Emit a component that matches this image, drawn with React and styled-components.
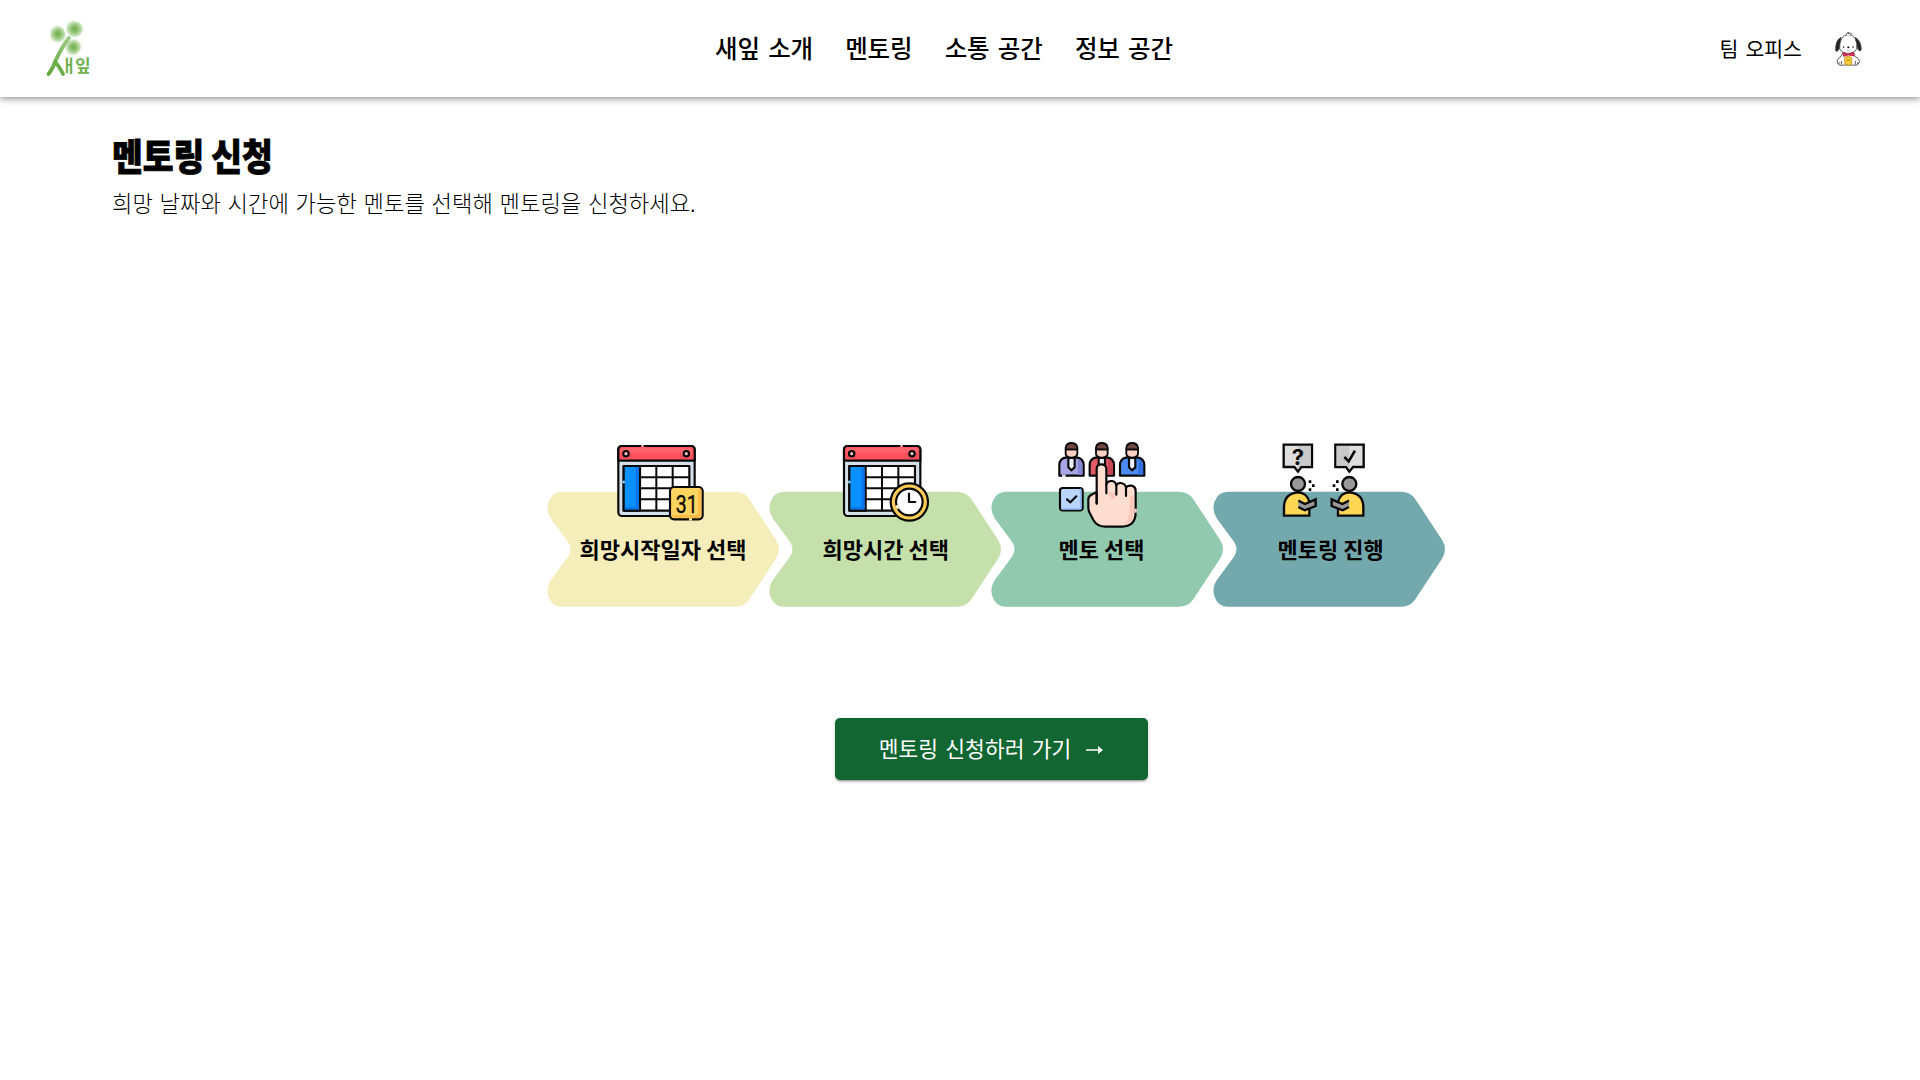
import React from 'react';
import styled, { createGlobalStyle } from 'styled-components';

const GlobalStyle = createGlobalStyle`
  * { box-sizing: border-box; }
  body {
    margin: 0;
    background: #fff;
    color: #000;
    font-family: 'Noto Sans CJK KR', 'Noto Sans', sans-serif;
    overflow: hidden;
  }
`;

const Page = styled.div`
  display: flex;
  flex-direction: column;
  height: 1080px;
`;

const Header = styled.header`
  display: grid;
  grid-template-columns: 670px 1fr auto auto;
  align-items: center;
  height: 97px;
  padding: 0 58px 0 45px;
  background: #fff;
  box-shadow: 0 2px 4px -1px rgba(0, 0, 0, 0.2), 0 4px 5px 0 rgba(0, 0, 0, 0.14),
    0 1px 10px 0 rgba(0, 0, 0, 0.12);
`;

const LogoSvg = styled.svg`
  display: block;
  width: 48px;
  height: 60px;
`;

const Nav = styled.nav`
  display: flex;
  gap: 32.3px;
  padding-bottom: 2px;
`;

const NavItem = styled.a`
  font-size: 24.5px;
  line-height: 36px;
  letter-spacing: -0.15px;
  word-spacing: 3px;
  font-weight: 500;
  white-space: nowrap;
`;

const TeamLink = styled.a`
  font-size: 20.5px;
  line-height: 30px;
  font-weight: 400;
  word-spacing: 2.5px;
  margin-right: 33px;
  padding-bottom: 2px;
  white-space: nowrap;
`;

const AvatarSvg = styled.svg`
  display: block;
  width: 27px;
  height: 36px;
`;

const Main = styled.main`
  display: flex;
  flex-direction: column;
  align-items: center;
  padding: 33px 50px 0 112px;
`;

const Intro = styled.section`
  align-self: stretch;
  height: 300px;
`;

const Title = styled.h1`
  width: max-content;
  margin: 0;
  font-size: 37px;
  line-height: 50px;
  font-weight: 900;
  word-spacing: -1px;
  -webkit-text-stroke: 0.8px #000;
  transform: scaleX(0.905);
  transform-origin: left center;
`;

const Subtitle = styled.p`
  width: max-content;
  margin: 4px 0 0;
  font-size: 23px;
  line-height: 36px;
  font-weight: 300;
  word-spacing: 1.9px;
  transform: scaleX(0.965);
  transform-origin: left center;
`;

const Steps = styled.ol`
  display: grid;
  grid-template-columns: repeat(4, 222px);
  margin: 0;
  padding: 0;
  list-style: none;
`;

const Step = styled.li`
  display: grid;
  height: 177px;
`;

const StepArt = styled.svg`
  grid-area: 1 / 1;
  display: block;
  width: 232px;
  height: 177px;
  overflow: visible;
`;

const StepLabel = styled.span`
  grid-area: 1 / 1;
  width: 232px;
  padding-top: 102px;
  padding-left: ${(p) => p.$start}px;
  font-size: 22px;
  line-height: 32px;
  font-weight: 700;
  white-space: nowrap;
`;

const ApplyButton = styled.button`
  display: flex;
  align-items: center;
  justify-content: center;
  gap: 15px;
  width: 313px;
  height: 62px;
  margin-top: 111px;
  padding: 0 0 2px 1px;
  border: 0;
  border-radius: 5px;
  background: #126632;
  color: #fff;
  font: 400 21.5px/32px 'Noto Sans CJK KR', sans-serif;
  word-spacing: 2.5px;
  box-shadow: 0 3px 1px -2px rgba(0, 0, 0, 0.2), 0 2px 2px 0 rgba(0, 0, 0, 0.14),
    0 1px 5px 0 rgba(0, 0, 0, 0.12);
`;

const ArrowSvg = styled.svg`
  width: 18px;
  height: 10px;
  margin-top: 4px;
`;

function Logo() {
  return (
    <LogoSvg viewBox="45 19 48 60" aria-label="새잎">
      <defs>
        <radialGradient id="leaf">
          <stop offset="0" stopColor="#69ab47" />
          <stop offset="0.35" stopColor="#8cc16f" />
          <stop offset="0.75" stopColor="#c4dfb5" />
          <stop offset="1" stopColor="#e6f2df" stopOpacity="0.3" />
        </radialGradient>
        <linearGradient id="stem" x1="1" y1="0" x2="0" y2="1">
          <stop offset="0" stopColor="#9ccb85" />
          <stop offset="1" stopColor="#5fa83a" />
        </linearGradient>
      </defs>
      <path d="M67 40Q60 45 52 42Q47 40 50 35Q50 27 56 25Q63 26 65 32Z" fill="url(#leaf)" />
      <path d="M68 38Q64 28 66 23Q71 18 76 21Q84 23 84 30Q81 37 75 38Z" fill="url(#leaf)" />
      <path d="M68 40Q75 36 82 42Q83 49 77 54Q72 58 66 54Q63 47 68 40Z" fill="url(#leaf)" />
      <path d="M69 38Q61 48 55 62Q52 70 48.500 74" fill="none" stroke="url(#stem)" strokeWidth="3.800" strokeLinecap="round" />
      <path d="M55 62Q59 66 63 74" fill="none" stroke="#6bae49" strokeWidth="3.800" strokeLinecap="round" />
      <g fill="#6fb24d" fontFamily="'Noto Sans CJK KR', sans-serif" fontWeight="700" fontSize="17">
        <text x="61" y="72">ㅐ</text>
        <text x="75" y="72">잎</text>
      </g>
    </LogoSvg>
  );
}

function Avatar() {
  return (
    <AvatarSvg viewBox="407 34 81 108">
      <g stroke="#444" strokeWidth="2.500" strokeLinejoin="round">
        <path d="M424 112Q412 116 414 130Q420 140 434 136H460Q476 140 480 128Q480 114 468 112L462 98H432Z" fill="#fff" />
        <path d="M425 53Q408 62 409 92Q410 98 416 93Q426 80 425 53Z" fill="#222" />
        <path d="M468 53Q485 64 486 88Q484 97 478 92Q468 78 468 53Z" fill="#222" />
        <path d="M426 58Q434 45 447 45Q461 45 468 58Q475 74 472 88Q464 101 447 101Q428 101 421 88Q420 72 426 58Z" fill="#fff" />
        <path d="M440 47Q441 38 448 38L446 43Q453 37 457 42L452 47" fill="#fff" />
        <path d="M431 98L446 104L463 98L464 109L447 106L433 110Z" fill="#d92b55" stroke="#b71c46" />
        <path d="M436 114Q447 106 457 114V134Q447 139 437 134Z" fill="#f9cf36" stroke="#c08d1d" />
        <path d="M442 121H452" stroke="#8a651c" />
        <path d="M419 127V134M426 124V135M468 124V135M475 127V134" fill="none" />
      </g>
      <circle cx="433" cy="82" r="2.200" />
      <circle cx="461" cy="82" r="2.200" />
      <ellipse cx="447" cy="83" rx="3.500" ry="2.500" />
      <path d="M442 91Q447 94 452 91" fill="none" stroke="#777" strokeWidth="1.500" />
    </AvatarSvg>
  );
}

const outline = { stroke: '#080808', strokeWidth: 6.5, strokeLinejoin: 'round', strokeLinecap: 'round' };

function Calendar({ shift = 0, topGap }) {
  return (
    <g transform={`translate(${shift} 0)`} {...outline}>
      <rect x="235" y="48" width="229" height="210" rx="11" fill="#d5e0e8" />
      <path d="M235 92V59Q235 48 246 48H453Q464 48 464 59V92Z" fill="#ff515d" />
      <path d="M240 60Q240 53 247 53H452Q458 53 458 60V70H240Z" fill="#ff626c" stroke="none" />
      <rect x="251" y="108" width="197" height="134" fill="#fff" />
      <rect x="251" y="108" width="49" height="134" fill="#0a91ff" />
      <path d="M287 112H297V238H255V231H287Z" fill="#0874ef" stroke="none" />
      <path d="M349 108V242M398 108V242M300 142H448M300 175H448M300 208H448" fill="none" strokeWidth="6" />
      <circle cx="258" cy="71" r="8" fill="#f7c3c5" />
      <circle cx="439" cy="71" r="8" fill="#f7c3c5" />
      <path d={`M${topGap} 48h7`} stroke="#ffa0a5" strokeLinecap="butt" strokeWidth="7" />
      <path d="M251 152v8" stroke="#8fd0ff" strokeLinecap="butt" strokeWidth="7" />
    </g>
  );
}

function DateIcon() {
  return (
    <g>
      <Calendar topGap={304} />
      <rect x="390" y="171" width="98" height="97" rx="12" fill="#ffd45f" {...outline} />
      <path d="M474 176H481Q484 177 484 184V259Q483 264 476 264H398L396 255H468Q474 254 474 247Z" fill="#ffbd4b" />
      <path d="M447 268h9" stroke="#ffe79e" strokeWidth="7" />
      <text x="407" y="248" fontFamily="Roboto, sans-serif" fontSize="77" fontWeight="400" textLength="66" lengthAdjust="spacingAndGlyphs" fill="#080808" stroke="#080808" strokeWidth="1">31</text>
    </g>
  );
}

function TimeIcon() {
  return (
    <g>
      <Calendar shift={17} topGap={404} />
      <g {...outline}>
        <circle cx="448" cy="216" r="56" fill="#ffcc57" />
        <circle cx="448" cy="216" r="40" fill="#fff" />
        <path d="M447 191V216H466" fill="none" />
      </g>
      <path d="M409 226l5 11" stroke="#fff0bf" strokeWidth="7" />
    </g>
  );
}

function Person({ cx, coat, shade }) {
  return (
    <g transform={`translate(${cx} 0)`} {...outline}>
      <path d="M-36 137V106Q-36 84 -14 82H14Q37 84 37 106V137Z" fill={coat} />
      <path d="M20 87Q33 92 33 107V134H19V108Z" fill={shade} stroke="none" />
      <path d="M-9 84V112L0 121L10 112V84Z" fill="#e9eff8" />
      <path d="M-17 58V73Q-13 83 0 83Q14 83 18 73V58Z" fill="#fdd0c4" strokeWidth="5.500" />
      <path d="M-17 58V52Q-14 39 0 39Q15 39 18 52V58Z" fill="#704640" strokeWidth="5.500" />
    </g>
  );
}

function MentorIcon() {
  return (
    <g>
      <Person cx={274} coat="#a9a6e5" shade="#8288d1" />
      <Person cx={365} coat="#e35b66" shade="#c94658" />
      <Person cx={456} coat="#4c8cf7" shade="#3270e3" />
      <path d="M246 137h11" stroke="#e0dfff" strokeWidth="7" />
      <g {...outline}>
        <rect x="240" y="174" width="68" height="67" rx="8" fill="#bad6ff" />
        <path d="M302 178V237H246" fill="none" stroke="#92b9f6" strokeWidth="5" />
        <path d="M261 208L271 217L289 199" fill="none" />
        <path
          d="M350 220V115Q351 103 364 103Q378 103 379 116V164Q382 153 394 153Q406 153 409 166Q412 158 423 159Q436 161 438 173Q442 166 454 167Q467 169 467 184V247Q467 289 427 290H375Q351 289 340 270L328 247Q325 240 325 230V208Q325 200 333 195L350 186Z"
          fill="#ffddd1"
        />
        <path d="M461 199V249Q461 280 430 283Q447 270 449 242V199Z" fill="#ffc6ba" stroke="none" />
        <path d="M384 187H405V207Q393 208 389 197Z" fill="#ffc9bd" stroke="none" />
        <path d="M350 186V221M379 164V190M409 166V194M438 173V198" fill="none" />
      </g>
      <path d="M467 236v12" stroke="#ffd8cf" strokeWidth="7" />
    </g>
  );
}

function Speaker() {
  return (
    <g stroke="#080808" strokeWidth="7">
      <path d="M251 44H336V111H304L294 125L283 111H251Z" fill="#dededf" />
      <path d="M294 48H332V107H302L294 118Z" fill="#c9c9c9" stroke="none" />
      <circle cx="294" cy="162" r="21" fill="#999" />
      <path d="M252 257V229Q254 190 294 187Q321 188 328 216V257Z" fill="#ffd755" />
      <path d="M295 212L315 222L347 208V228L314 241L295 231" fill="#999" />
      <path d="M326 155h8M336 167h8M326 179h8" strokeWidth="8" />
    </g>
  );
}

function MeetingIcon() {
  return (
    <g>
      <Speaker />
      <g transform="translate(742 0) scale(-1 1)">
        <Speaker />
      </g>
      <text x="294" y="106" textAnchor="middle" fontFamily="Inter, sans-serif" fontSize="66" fontWeight="700" fill="#080808">?</text>
      <path d="M433 81L446 94L465 62" fill="none" stroke="#080808" strokeWidth="8" />
    </g>
  );
}

const CHEVRON =
  'M15 0H188Q197 0 202 7L229 48Q235 57.500 229 67L202 108Q197 115 188 115H15Q5 115 1.500 105Q-1.500 96 4 88L21 65Q26 57.500 21 50L4 27Q-1.500 19 1.500 10Q5 0 15 0Z';

const steps = [
  { label: '희망시작일자 선택', color: '#f5eebb', start: 32.5, offset: -7, Icon: DateIcon },
  { label: '희망시간 선택', color: '#c5e0aa', start: 53.5, offset: -9, Icon: TimeIcon },
  { label: '멘토 선택', color: '#91c9ae', start: 67.5, offset: -11, Icon: MentorIcon },
  { label: '멘토링 진행', color: '#73a8ad', start: 64.5, offset: -13, Icon: MeetingIcon },
];

const navItems = ['새잎 소개', '멘토링', '소통 공간', '정보 공간'];

export default function App() {
  return (
    <Page>
      <GlobalStyle />
      <Header>
        <Logo />
        <Nav>
          {navItems.map((item) => (
            <NavItem key={item}>{item}</NavItem>
          ))}
        </Nav>
        <TeamLink>팀 오피스</TeamLink>
        <Avatar />
      </Header>
      <Main>
        <Intro>
          <Title>멘토링 신청</Title>
          <Subtitle>희망 날짜와 시간에 가능한 멘토를 선택해 멘토링을 신청하세요.</Subtitle>
        </Intro>
        <Steps>
          {steps.map(({ label, color, start, offset, Icon }) => (
            <Step key={label}>
              <StepArt viewBox="0 0 232 177">
                <path d={CHEVRON} transform="translate(0 61.700)" fill={color} />
                <g transform={`translate(${offset} 0) scale(0.33333)`}>
                  <Icon />
                </g>
              </StepArt>
              <StepLabel $start={start}>{label}</StepLabel>
            </Step>
          ))}
        </Steps>
        <ApplyButton>
          멘토링 신청하러 가기
          <ArrowSvg viewBox="0 0 18 10">
            <path d="M0 5H14" stroke="#fff" strokeWidth="1.500" />
            <path d="M12 1L17 5L12 9Z" fill="#fff" />
          </ArrowSvg>
        </ApplyButton>
      </Main>
    </Page>
  );
}
